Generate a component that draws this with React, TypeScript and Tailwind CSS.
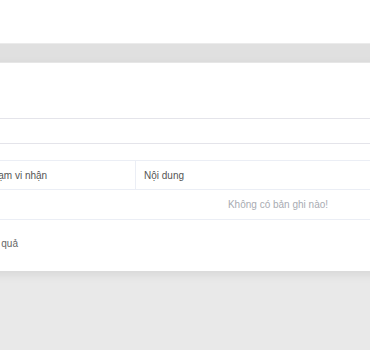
export default function App() {
  return (
    <div
      className="min-h-[350px] overflow-hidden bg-[#e9e9e9]"
      style={{ fontFamily: '"Liberation Sans", Arial, sans-serif' }}
    >
      {/* Header */}
      <div className="h-[43px] bg-white" />
      <div className="h-[20px] bg-[#e0e0e0] border-y border-[#ebebeb]" />

      {/* Card */}
      <div className="-ml-[40px] w-[700px] bg-white shadow-[0_3px_10px_rgba(0,0,0,0.09)]">
        <div className="h-[55px]" />
        <div className="h-[26px] border-y border-[#e4e4ea]" />
        <div className="h-[16px]" />

        {/* Table */}
        <div className="ml-[18px] w-[600px] text-[10px]">
          <div className="flex h-[30px] border-y border-[#ebeef5] text-[#555]">
            <div className="flex w-[158px] items-center border-r border-[#ebeef5] pl-[8px]">
              Phạm vi nhận
            </div>
            <div className="flex flex-1 items-center pl-[8px]">Nội dung</div>
          </div>
          <div className="flex h-[30px] items-center justify-center border-b border-[#ebeef5] text-[#a8abb2]">
            Không có bản ghi nào!
          </div>
        </div>

        {/* Footer */}
        <div className="flex h-[51px] items-center pb-[4px]">
          <div className="flex w-[58px] justify-end whitespace-nowrap text-[10px] text-[#666]">
            Tổng số: 0 kết quả
          </div>
        </div>
      </div>
    </div>
  );
}
